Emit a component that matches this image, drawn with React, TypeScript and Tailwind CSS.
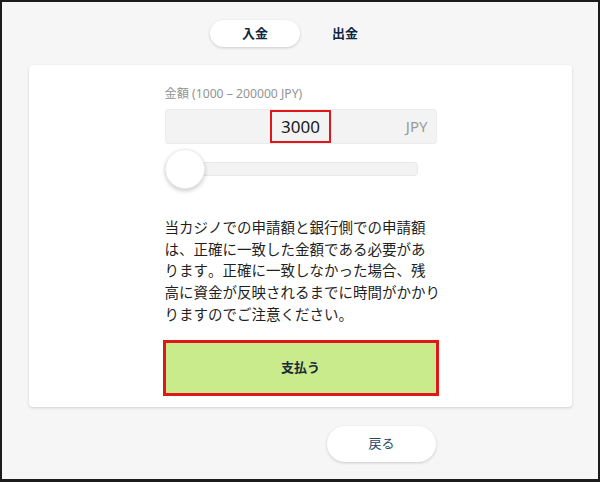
const noticeLines = [
  '当カジノでの申請額と銀行側での申請額',
  'は、正確に一致した金額である必要があ',
  'ります。正確に一致しなかった場合、残',
  '高に資金が反映されるまでに時間がかかり',
  'りますのでご注意ください。',
];

const App = () => {
  return (
    <div
      className="w-[600px] h-[482px] box-border border-2 border-b-[3px] border-[#1c1c1c] bg-[#f6f6f6]"
      style={{ fontFamily: '"Noto Sans", "Noto Sans CJK JP", sans-serif' }}
    >
      {/* Tabs */}
      <div className="flex justify-center pt-[18px]">
        <div className="w-[90px] h-[27px] rounded-full bg-white shadow-[0_1px_3px_rgba(0,0,0,0.18)] flex items-center justify-center text-[13px] font-bold text-[#0f2740]">
          入金
        </div>
        <div className="w-[90px] h-[27px] flex items-center justify-center text-[13px] font-bold text-[#0f2740]">
          出金
        </div>
      </div>

      {/* Card */}
      <div className="mt-[18px] ml-[27px] w-[543px] h-[342px] rounded-[4px] bg-white shadow-[0_1px_3px_rgba(0,0,0,0.16)] pt-[22px]">
        <div className="w-[272px] mx-auto">
          <div className="text-[12.2px] leading-[14px] text-[#939393]">金額 (1000 – 200000 JPY)</div>

          {/* Amount input */}
          <div className="mt-[8px] h-[35px] rounded-[3px] border border-[#ececec] bg-[#f3f3f3] relative flex items-center justify-center">
            <div className="w-[61px] h-[33px] border-[2.5px] border-[#e0161b] flex items-center justify-center text-[17px] text-[#1a1a1a]">
              3000
            </div>
            <span className="absolute right-[8px] text-[15px] text-[#9a9a9a]">JPY</span>
          </div>

          {/* Slider */}
          <div className="mt-[5px] h-[40px] relative flex items-center">
            <div className="w-[253px] h-[14px] rounded-[4px] border border-[#e8e8e8] bg-[#f3f3f3]" />
            <div className="absolute left-0 top-0 w-[40px] h-[40px] rounded-full bg-white border border-[#ececec] shadow-[0_2px_4px_rgba(0,0,0,0.2)]" />
          </div>

          {/* Notice */}
          <p
            className="mt-[27px] text-[14.5px] leading-[21.7px] text-[#1f1f1f] whitespace-nowrap [font-kerning:none]"
            style={{ fontFamily: '"Noto Sans CJK JP", sans-serif' }}
          >
            {noticeLines.map((line, i) => (
              <span key={i} className="block">
                {line}
              </span>
            ))}
          </p>

          {/* Pay button */}
          <div className="mt-[15px] -mx-[2px] h-[56px] border-[3px] border-[#e0161b] bg-[#c9eb8c] flex items-center justify-center text-[13px] font-bold text-[#1a2a3a]">
            支払う
          </div>
        </div>
      </div>

      {/* Back */}
      <div className="w-[272px] mx-auto pl-[1px] mt-[19px] flex justify-end">
        <div className="w-[109px] h-[36px] rounded-full bg-white shadow-[0_1px_3px_rgba(0,0,0,0.18)] flex items-center justify-center text-[13px] text-[#2a4763]">
          戻る
        </div>
      </div>
    </div>
  );
};

export default App;
